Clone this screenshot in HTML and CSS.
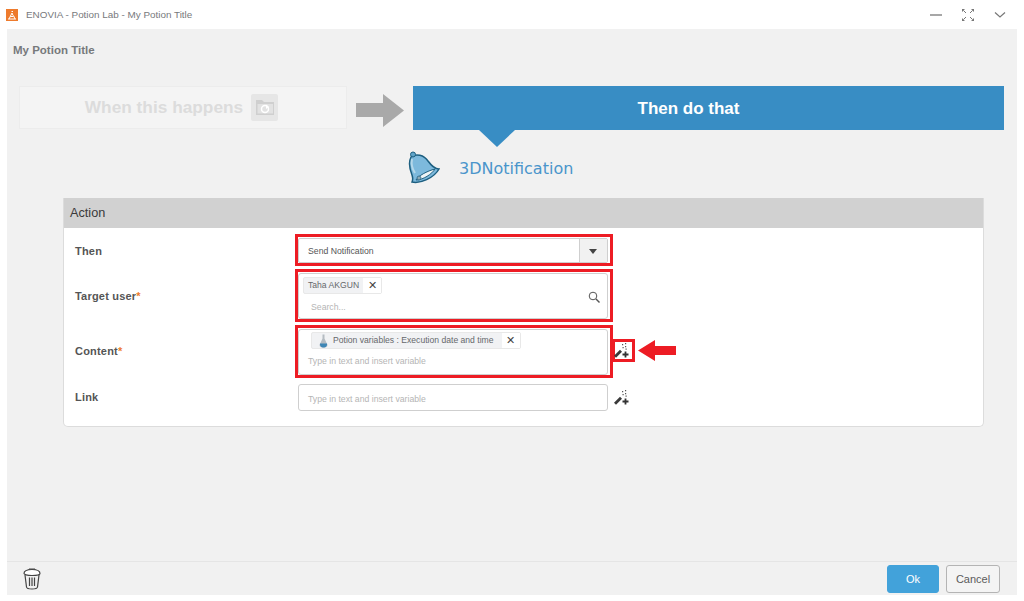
FILE: index.html
```html
<!DOCTYPE html>
<html lang="en">
<head>
    <meta charset="UTF-8">
    <title>ENOVIA - Potion Lab - My Potion Title</title>
    <link rel="stylesheet" href="styles.css">
</head>
<body>

    <!-- Title bar -->
    <div class="titlebar">
        <svg class="app-logo" width="12" height="12" viewBox="0 0 12 12">
            <rect width="12" height="12" fill="#ee7b2d"/>
            <path d="M2 10h8M3 10l3-6 1 2.500M7.500 6.500L9 10M5.500 2.500h1.500M4.500 7.500h3" fill="none" stroke="#fff" stroke-width="1"/>
        </svg>
        <span class="app-title">ENOVIA - Potion Lab - My Potion Title</span>
        <div class="window-icons">
            <svg width="12" height="12" viewBox="0 0 12 12"><path d="M0 6h12" stroke="#777" stroke-width="1.300"/></svg>
            <svg width="12" height="12" viewBox="0 0 12 12"><path d="M0 0h3L0 3zM12 0H9l3 3zM0 12h3L0 9zM12 12H9l3-3z" fill="#777"/><path d="M1.500 1.500l2.500 2.500M10.500 1.500L8 4M1.500 10.500L4 8M10.500 10.500L8 8" stroke="#777"/></svg>
            <svg width="12" height="12" viewBox="0 0 12 12"><path d="M1 3.500l5 4.500 5-4.500" fill="none" stroke="#777" stroke-width="1.200"/></svg>
        </div>
    </div>

    <div class="panel">
        <div class="panel-scroll">
            <div class="potion-title">My Potion Title</div>

            <!-- When / Then steps -->
            <div class="steps">
                <div class="step-when">
                    <span>When this happens</span>
                    <span class="folder-tile">
                        <svg width="20" height="17" viewBox="0 0 20 17">
                            <path d="M1 1h6l2 2h10v13H1z" fill="#cfcfcf"/>
                            <rect x="2.500" y="5" width="15.500" height="9.500" fill="#e2e2e2"/>
                            <circle cx="10" cy="10" r="3.500" fill="none" stroke="#fff" stroke-width="1.500"/>
                            <path d="M11 5.500l3 2.500-3 2z" fill="#fff"/>
                        </svg>
                    </span>
                </div>
                <svg class="step-arrow" width="48" height="33" viewBox="0 0 48 33">
                    <path d="M0 9h27V0l21 16.500L27 33V23H0z" fill="#a9a9a9"/>
                </svg>
                <div class="step-then">Then do that</div>
            </div>

            <!-- Selected app -->
            <div class="app-pick">
                <svg class="bell" width="33" height="33" viewBox="0 0 33 33">
                    <path d="M4 6C1 12 3 19 5 24c1 3 1 5 0 7 8 2 22-4 27-13-5 0-8-4-11-8C17 4 9 2 4 6z" fill="#7db9dc" stroke="#1d5f80" stroke-width="1.500"/>
                    <path d="M5 8C4 13 6 19 8 22" fill="none" stroke="#b5d8ea" stroke-width="2"/>
                    <circle cx="6" cy="3.500" r="2.500" fill="#5fa3c8" stroke="#1d5f80"/>
                    <path d="M9 29c2-4 11-9 19-11-3 5-12 11-19 11z" fill="#eef4f6" stroke="#1d5f80"/>
                    <circle cx="12" cy="27" r="2" fill="#8fa9b5" stroke="#1d5f80" stroke-width=".7"/>
                </svg>
                <span class="app-name">3DNotification</span>
            </div>

            <!-- Action form -->
            <div class="card">
                <div class="card-head">Action</div>
                <div class="card-body">
                    <div class="row">
                        <label class="row-label">Then</label>
                        <div class="mark">
                            <div class="select">
                                <span class="select-value">Send Notification</span>
                                <span class="select-btn"></span>
                            </div>
                        </div>
                    </div>
                    <div class="row">
                        <label class="row-label">Target user<em>*</em></label>
                        <div class="mark">
                            <div class="input input-target">
                                <span class="chip"><span class="chip-text">Taha AKGUN</span><span class="chip-x">✕</span></span>
                                <span class="hint hint-search">Search...</span>
                                <svg class="search-icon" width="12" height="12" viewBox="0 0 12 12">
                                    <circle cx="5" cy="5" r="3.800" fill="none" stroke="#555" stroke-width="1"/>
                                    <path d="M8 8l3.500 3.500" stroke="#555" stroke-width="1.400"/>
                                </svg>
                            </div>
                        </div>
                    </div>
                    <div class="row">
                        <label class="row-label">Content<em>*</em></label>
                        <div class="mark">
                            <div class="input input-content">
                                <span class="chip chip-var">
                                    <span class="chip-text">
                                        <svg width="9" height="14" viewBox="0 0 9 14">
                                            <path d="M3.500 0.500h2v4L8.500 11c0 2-2 2.500-4 2.500S0.500 13 0.500 11l3-6.500z" fill="#b5bcc2"/>
                                            <path d="M1 9.500h7c.5 2.500-1.500 4-3.500 4S.5 12 1 9.500z" fill="#3f86b5"/>
                                        </svg>
                                        Potion variables : Execution date and time
                                    </span>
                                    <span class="chip-x">✕</span>
                                </span>
                                <span class="hint">Type in text and insert variable</span>
                            </div>
                        </div>
                        <span class="wand-box wand-marked">
                            <svg width="15" height="15" viewBox="0 0 15 15">
                                <path d="M0 12.800L6 6.800 8 8.800 2 14.800z" fill="#3a3a3a"/>
                                <path d="M11.500 8.500v6M8.500 11.500h6" stroke="#333" stroke-width="1.800"/>
                                <path d="M8 1h1.200v1.200H8zM11 0h1.200v1.200H11zM8.500 4h1.200v1.200H8.500zM11 3h1.200v1.200H11zM11.500 5.500h1.200v1.200h-1.200z" fill="#555"/>
                            </svg>
                        </span>
                        <svg class="note-arrow" width="38" height="21" viewBox="0 0 38 21">
                            <path d="M0 10.500L17 0v6h21v9H17v6z" fill="#ed1c24"/>
                        </svg>
                    </div>
                    <div class="row">
                        <label class="row-label">Link</label>
                        <div class="mark mark-off">
                            <div class="input input-link">
                                <span class="hint">Type in text and insert variable</span>
                            </div>
                        </div>
                        <span class="wand-box">
                            <svg width="15" height="15" viewBox="0 0 15 15">
                                <path d="M0 12.800L6 6.800 8 8.800 2 14.800z" fill="#3a3a3a"/>
                                <path d="M11.500 8.500v6M8.500 11.500h6" stroke="#333" stroke-width="1.800"/>
                                <path d="M8 1h1.200v1.200H8zM11 0h1.200v1.200H11zM8.500 4h1.200v1.200H8.500zM11 3h1.200v1.200H11zM11.500 5.500h1.200v1.200h-1.200z" fill="#555"/>
                            </svg>
                        </span>
                    </div>
                </div>
            </div>
        </div>

        <!-- Footer -->
        <div class="footer">
            <svg class="trash" width="18" height="22" viewBox="0 0 18 22">
                <path d="M1 5.500C1 3 4 1.500 9 1.500s8 1.500 8 4c0 1-3 2-8 2s-8-1-8-2z" fill="#fff" stroke="#444" stroke-width="1.200"/>
                <path d="M6 2V1h6v1" fill="none" stroke="#444"/>
                <path d="M2 7l1.500 12c.2 1.500 2.500 2 5.500 2s5.300-.5 5.500-2L16 7" fill="none" stroke="#444" stroke-width="1.200"/>
                <path d="M6.500 9.500v8.500M9 9.500v8.500M11.500 9.500v8.500" stroke="#444" stroke-width="1.200"/>
            </svg>
            <div class="footer-btns">
                <button class="btn btn-ok">Ok</button>
                <button class="btn btn-cancel">Cancel</button>
            </div>
        </div>
    </div>

</body>
</html>
```

FILE: styles.css
```css
/* General */
html, body {
    margin: 0;
    padding: 0;
}

body {
    width: 1024px;
    height: 601px;
    overflow: hidden;
    background-color: #fff;
    font-family: "Liberation Sans", Arial, sans-serif;
    color: #555;
}

/* Title bar */
.titlebar {
    display: flex;
    align-items: center;
    height: 29px;
    padding-left: 6px;
    box-sizing: border-box;
}

.app-title {
    margin-left: 8px;
    font-size: 9.900px;
    color: #77797c;
}

.window-icons {
    display: flex;
    gap: 20px;
    margin-left: auto;
    margin-right: 18px;
}

/* Gray panel */
.panel {
    display: flex;
    flex-direction: column;
    justify-content: space-between;
    width: 1010px;
    height: 566px;
    margin-left: 7px;
    background-color: #f1f1f1;
}

.potion-title {
    padding: 15px 0 0 6px;
    height: 27px;
    font-size: 11.500px;
    font-weight: bold;
    color: #77797c;
}

/* Steps */
.steps {
    display: flex;
    align-items: flex-start;
    margin: 15px 0 0 12px;
}

.step-when {
    display: flex;
    align-items: center;
    justify-content: center;
    gap: 8px;
    width: 328px;
    height: 43px;
    box-sizing: border-box;
    padding-right: 3px;
    background-color: #f4f4f4;
    border: 1px solid #ececec;
    font-size: 17.300px;
    font-weight: bold;
    color: #dcdcdc;
}

.folder-tile {
    display: flex;
    align-items: center;
    justify-content: center;
    width: 27px;
    height: 27px;
    border-radius: 2px;
    background-color: #e6e6e6;
}

.step-arrow {
    margin: 8px 9px 0;
}

.step-then {
    position: relative;
    width: 591px;
    height: 44px;
    box-sizing: border-box;
    padding-right: 40px;
    line-height: 45px;
    text-align: center;
    background-color: #388dc4;
    color: #fff;
    font-size: 17px;
    font-weight: bold;
}

.step-then::after {
    content: "";
    position: absolute;
    top: 44px;
    left: 66px;
    border-left: 18px solid transparent;
    border-right: 18px solid transparent;
    border-top: 17px solid #388dc4;
}

/* Selected app */
.app-pick {
    display: flex;
    align-items: center;
    margin: 21px 0 0 400px;
    height: 33px;
}

.app-name {
    margin-left: 19px;
    padding-top: 2px;
    font-family: "DejaVu Sans", sans-serif;
    font-size: 16px;
    color: #4a95cb;
}

/* Form card */
.card {
    width: 921px;
    height: 229px;
    margin: 14px 0 0 56px;
    box-sizing: border-box;
    background-color: #fff;
    border: 1px solid #dcdcdc;
    border-top: none;
    border-radius: 0 0 5px 5px;
}

.card-head {
    height: 30px;
    line-height: 30px;
    padding-left: 6px;
    background-color: #d1d1d1;
    font-size: 12.700px;
    color: #3a3a3a;
}

.card-body {
    display: flex;
    flex-direction: column;
    gap: 3px;
    padding-top: 6px;
}

.row {
    display: flex;
    align-items: center;
}

.row-label {
    width: 220px;
    padding-left: 11px;
    font-size: 11px;
    font-weight: bold;
    color: #555;
    letter-spacing: 0.200px;
}

.row:first-child .row-label {
    padding-top: 2px;
}

.row:nth-child(n+3) .row-label {
    padding-bottom: 2px;
}

.row-label em {
    font-style: normal;
    color: #ee7b2d;
}

/* Red annotation frame */
.mark {
    width: 318px;
    box-sizing: border-box;
    border: 3px solid #ed1c24;
    padding: 1px 2px 0 0;
}

.mark-off {
    border-color: transparent;
    padding-top: 0;
}

/* Fields */
.select {
    display: flex;
    justify-content: space-between;
    height: 25px;
    box-sizing: border-box;
    background-color: #fff;
    border: 1px solid #cfcfcf;
    border-radius: 2px;
}

.select-value {
    padding-left: 9px;
    line-height: 24px;
    font-size: 8.700px;
    color: #555;
}

.select-btn {
    position: relative;
    width: 27px;
    background-color: #f1f1f1;
    border-left: 1px solid #cfcfcf;
}

.select-btn::after {
    content: "";
    position: absolute;
    top: 10px;
    left: 9px;
    border-left: 4px solid transparent;
    border-right: 4px solid transparent;
    border-top: 5px solid #444;
}

.input {
    position: relative;
    box-sizing: border-box;
    background-color: #fff;
    border: 1px solid #cfcfcf;
    border-radius: 3px;
}

.input-target,
.input-content {
    display: flex;
    flex-direction: column;
    align-items: flex-start;
    height: 46px;
}

.input-target {
    padding: 3px 4px;
}

.input-content {
    padding: 2px 9px;
}

.input-link {
    height: 27px;
    line-height: 24px;
    padding-left: 9px;
}

.chip {
    display: inline-flex;
    box-sizing: border-box;
    height: 17px;
    line-height: 15px;
    font-size: 8.600px;
    border: 1px solid #e8e8e8;
    border-radius: 2px;
    background-color: #f1f2f4;
    color: #66686b;
}

.chip-text {
    padding: 0 4px;
}

.chip-var {
    margin-left: 3px;
}

.chip-var .chip-text {
    display: inline-flex;
    align-items: center;
    gap: 5px;
    padding: 0 8px 0 7px;
}

.chip-x {
    width: 18px;
    text-align: center;
    background-color: #fff;
    color: #444;
    font-size: 11px;
}

.hint {
    font-size: 8.700px;
    color: #b5b5b5;
}

.input-content .hint {
    margin-top: 7px;
}

.hint-search {
    margin: 8px 0 0 8px;
}

.search-icon {
    position: absolute;
    top: 17px;
    right: 7px;
}

.wand-box {
    display: flex;
    align-items: center;
    width: 23px;
    height: 23px;
    margin-left: -1px;
    box-sizing: border-box;
    border: 3px solid transparent;
}

.wand-box svg {
    flex: none;
    margin-left: -1px;
}

.wand-marked {
    margin-bottom: 2px;
    border-color: #ed1c24;
}

.note-arrow {
    margin: 0 0 2px 3px;
}

/* Footer */
.footer {
    display: flex;
    align-items: center;
    justify-content: space-between;
    height: 34px;
    box-sizing: border-box;
    padding: 0 17px 0 16px;
    border-top: 1px solid #e5e5e5;
}

.footer-btns {
    display: flex;
    gap: 7px;
}

.btn {
    height: 28px;
    padding: 0;
    font-family: inherit;
    font-size: 11px;
    border-radius: 3px;
}

.btn-ok {
    width: 52px;
    background-color: #42a2da;
    border: 1px solid #42a2da;
    color: #fff;
}

.btn-cancel {
    width: 54px;
    background-color: #f4f4f4;
    border: 1px solid #b4b4b4;
    color: #5b5b5b;
}
```
